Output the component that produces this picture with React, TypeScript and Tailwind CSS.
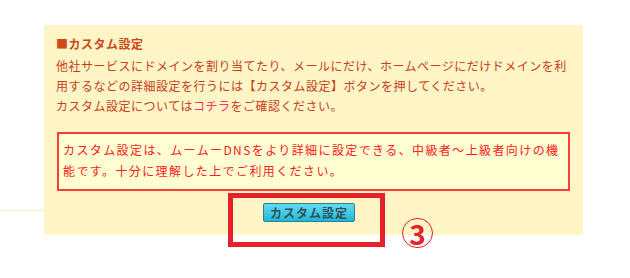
import React from "react";

export default function App() {
  return (
    <div
      className="relative w-[630px] h-[278px] bg-white overflow-hidden"
      style={{ fontFamily: '"Noto Sans CJK JP", "Noto Sans", sans-serif' }}
    >
      <div className="flex pt-[25px]">
        <div className="w-[44px]">
          <div className="mt-[185px] h-[1px] bg-[#fff3c4]" />
        </div>
        <div className="w-[539px] h-[210px] bg-[#fff5c6] pl-[12px] pt-[9px]">
          <div className="text-[12px] leading-[20px] tracking-[0.5px] text-[#c8401a] whitespace-nowrap">
            <div className="font-bold text-[#cc4a1a] mb-[2px]">■カスタム設定</div>
            <div>他社サービスにドメインを割り当てたり、メールにだけ、ホームページにだけドメインを利</div>
            <div>用するなどの詳細設定を行うには【カスタム設定】ボタンを押してください。</div>
            <div>
              カスタム設定については<span className="text-[#ff3366]">コチラ</span>をご確認ください。
            </div>
          </div>
          <div className="mt-[16px] ml-[1px] w-[513px] h-[59px] border-2 border-[#ff3b3b] bg-[#ffffd2] pl-[4px] pt-[5px] text-[12px] leading-[21px] tracking-[1.4px] text-[#ff2020] whitespace-nowrap">
            <div>カスタム設定は、ムームーDNSをより詳細に設定できる、中級者～上級者向けの機</div>
            <div>能です。十分に理解した上でご利用ください。</div>
          </div>
          <div className="mt-[12px] pl-[207px]">
            <button className="w-[92px] h-[19px] flex items-center justify-center rounded-[2px] border border-[#2f7e8c] bg-gradient-to-b from-[#5fdcf2] to-[#1bb8d8] text-[12px] font-bold tracking-[1px] text-[#30505a] leading-none">
              カスタム設定
            </button>
          </div>
        </div>
      </div>
      <div className="absolute left-[228px] top-[193px] w-[157px] h-[54px] border-[5px] border-[#e8202a]" />
      <div className="absolute left-[402px] top-[218px] w-[31px] h-[30px] rounded-full border-[1.5px] border-[#e8202a] flex items-center justify-center text-[#e8202a] text-[28px] font-bold leading-none">
        3
      </div>
    </div>
  );
}
